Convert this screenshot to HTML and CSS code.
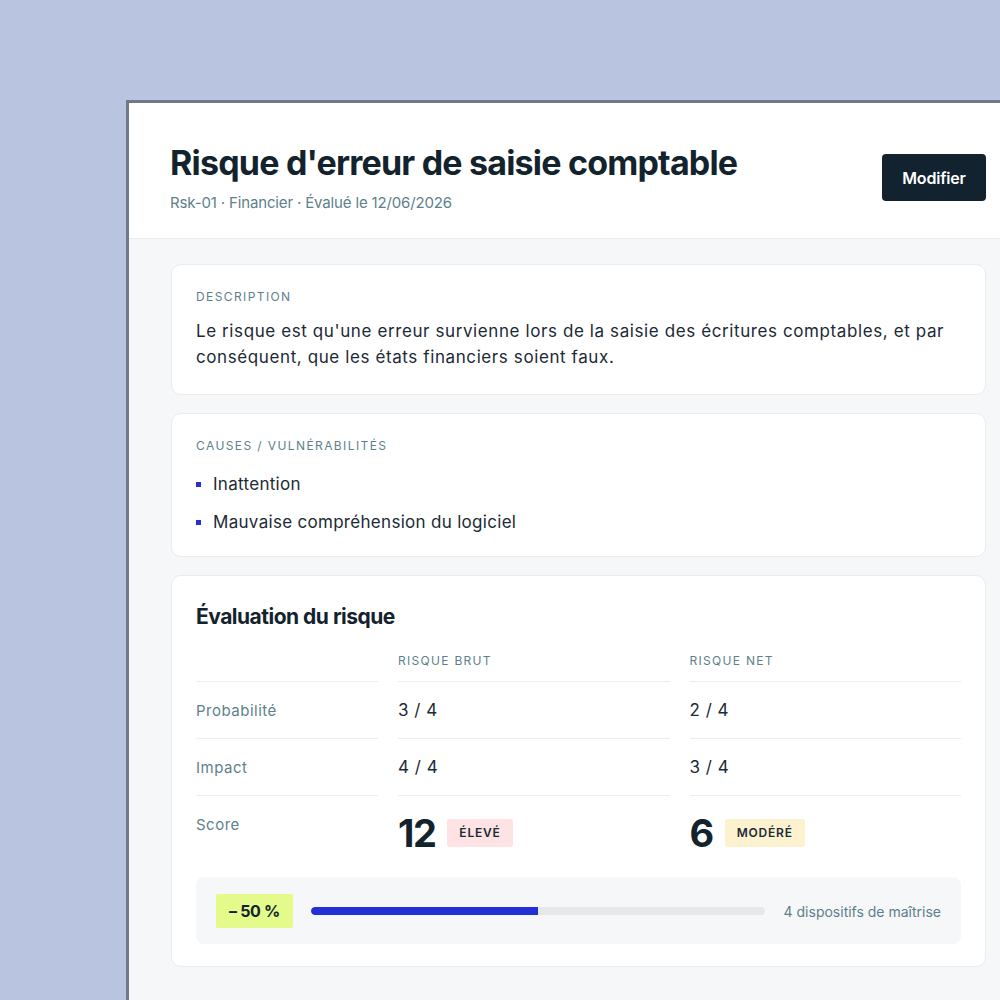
FILE: index.html
```html
<!DOCTYPE html>
<html lang="fr">
<head>
<meta charset="utf-8">
<title>Risque d'erreur de saisie comptable</title>
<link rel="stylesheet" href="styles.css">
</head>
<body>
<div class="stage">
  <div class="window">
    <header class="header">
      <div class="header-text">
        <h1 class="title">Risque d'erreur de saisie comptable</h1>
        <p class="meta">Rsk-01 · Financier · Évalué le 12/06/2026</p>
      </div>
      <button class="btn">Modifier</button>
    </header>
    <main class="body">
      <section class="card">
        <div class="label">Description</div>
        <p class="desc">Le risque est qu'une erreur survienne lors de la saisie des écritures comptables, et par conséquent, que les états financiers soient faux.</p>
      </section>
      <section class="card card-causes">
        <div class="label">Causes / Vulnérabilités</div>
        <ul class="causes">
          <li>Inattention</li>
          <li>Mauvaise compréhension du logiciel</li>
        </ul>
      </section>
      <section class="card card-eval">
        <h2 class="eval-title">Évaluation du risque</h2>
        <div class="grid">
          <div class="cell head"></div>
          <div class="cell head col">Risque brut</div>
          <div class="cell head col">Risque net</div>

          <div class="cell rowlabel">Probabilité</div>
          <div class="cell val">3 / 4</div>
          <div class="cell val">2 / 4</div>

          <div class="cell rowlabel">Impact</div>
          <div class="cell val">4 / 4</div>
          <div class="cell val">3 / 4</div>

          <div class="cell rowlabel last">Score</div>
          <div class="cell score last"><span class="num">12</span><span class="badge high">Élevé</span></div>
          <div class="cell score last"><span class="num">6</span><span class="badge mid">Modéré</span></div>
        </div>
        <div class="reduction">
          <span class="chip">– 50 %</span>
          <div class="track"><div class="fill" style="width: 50%"></div></div>
          <span class="controls">4 dispositifs de maîtrise</span>
        </div>
      </section>
    </main>
  </div>
</div>
</body>
</html>
```
FILE: styles.css
```css
html, body {
  margin: 0;
  padding: 0;
  height: 100%;
  overflow: hidden;
}
body {
  background: #b9c4e1;
  font-family: "Inter", "Liberation Sans", sans-serif;
  color: #13232e;
}
.stage {
  padding: 100px 0 0 126px;
}
.window {
  width: 897px;
  height: 897px;
  overflow: hidden;
  border: 3px solid #717887;
  border-right: none;
  border-bottom: none;
  background: #f5f7f9;
}
.header {
  background: #fff;
  display: flex;
  justify-content: space-between;
  align-items: flex-start;
  padding: 40px 40px 0 41px;
  height: 95px;
  border-bottom: 1px solid #e9edf0;
}
.title {
  margin: 0;
  font-size: 34px;
  font-weight: 700;
  letter-spacing: -0.8px;
  line-height: 40px;
  color: #13232e;
}
.meta {
  margin: 10px 0 0;
  font-size: 15px;
  letter-spacing: -0.15px;
  color: #5e7f8b;
}
.btn {
  margin-top: 11px;
  width: 104px;
  height: 47px;
  background: #12232f;
  color: #fff;
  border: none;
  border-radius: 4px;
  font-family: inherit;
  font-size: 16px;
  font-weight: 600;
  letter-spacing: -0.2px;
}
.body {
  padding: 25px 40px 0 42px;
  display: flex;
  flex-direction: column;
  gap: 18px;
}
.card {
  background: #fff;
  border: 1px solid #e9edf0;
  border-radius: 10px;
  padding: 24px;
}
.label {
  font-size: 12px;
  letter-spacing: 1.4px;
  text-transform: uppercase;
  color: #5e7f8b;
  line-height: 16px;
}
.desc {
  margin: 13px 0 0;
  font-size: 17px;
  line-height: 26px;
  letter-spacing: 0.6px;
  color: #1b2a35;
}
.card-causes {
  padding-bottom: 21px;
}
.causes {
  list-style: none;
  margin: 17px 0 0;
  padding: 0;
  display: flex;
  flex-direction: column;
  gap: 12px;
}
.causes li {
  display: flex;
  align-items: center;
  font-size: 17px;
  line-height: 26px;
  letter-spacing: 0.3px;
  color: #1b2a35;
}
.causes li::before {
  content: "";
  width: 5px;
  height: 5px;
  background: #2630d0;
  margin-right: 12px;
}
.card-eval {
  padding-bottom: 22px;
}
.eval-title {
  margin: 3px 0 0;
  font-size: 21px;
  font-weight: 700;
  letter-spacing: -0.5px;
  line-height: 28px;
  color: #13232e;
}
.grid {
  display: grid;
  grid-template-columns: 182px 1fr 1fr;
  column-gap: 20px;
  margin-top: 12px;
}
.cell {
  border-bottom: 1px solid #eceff2;
  display: flex;
  align-items: center;
  height: 57px;
  box-sizing: border-box;
}
.cell.head {
  height: 39px;
  align-items: flex-start;
  padding-top: 10px;
  font-size: 12px;
  letter-spacing: 1.3px;
  text-transform: uppercase;
  color: #5e7f8b;
}
.cell.rowlabel {
  font-size: 15px;
  letter-spacing: 0.5px;
  color: #5e7f8b;
}
.cell.val {
  font-size: 17px;
  color: #1b2a35;
  letter-spacing: 0.5px;
}
.cell.last {
  border-bottom: none;
}
.cell.rowlabel.last {
  align-items: flex-start;
  padding-top: 19px;
  height: 74px;
}
.cell.score {
  height: 73px;
  align-items: center;
  gap: 12px;
}
.num {
  font-size: 38px;
  font-weight: 700;
  letter-spacing: -1.5px;
  color: #13232e;
}
.badge {
  font-size: 12px;
  font-weight: 600;
  line-height: 14px;
  letter-spacing: 0.8px;
  text-transform: uppercase;
  padding: 7px 12px;
  border-radius: 3px;
  color: #1b2a35;
}
.badge.high { background: #fde3e3; }
.badge.mid { background: #fcf2cf; }
.reduction {
  margin-top: 7px;
  background: #f5f7f9;
  border-radius: 8px;
  padding: 17px 20px 16px;
  display: flex;
  align-items: center;
  gap: 18px;
}
.chip {
  flex: none;
  white-space: nowrap;
  background: #e4fa8a;
  border-radius: 2px;
  padding: 7px 13px;
  font-size: 16px;
  font-weight: 700;
  letter-spacing: -0.3px;
  color: #13232e;
}
.track {
  flex: 1 1 auto;
  margin-right: 1px;
  height: 8px;
  background: #e6e8ec;
  border-radius: 4px;
  overflow: hidden;
}
.fill {
  height: 100%;
  background: #2330d6;
  border-radius: 4px 0 0 4px;
}
.controls {
  flex: none;
  white-space: nowrap;
  font-size: 14px;
  letter-spacing: 0;
  color: #5e7f8b;
}
```
